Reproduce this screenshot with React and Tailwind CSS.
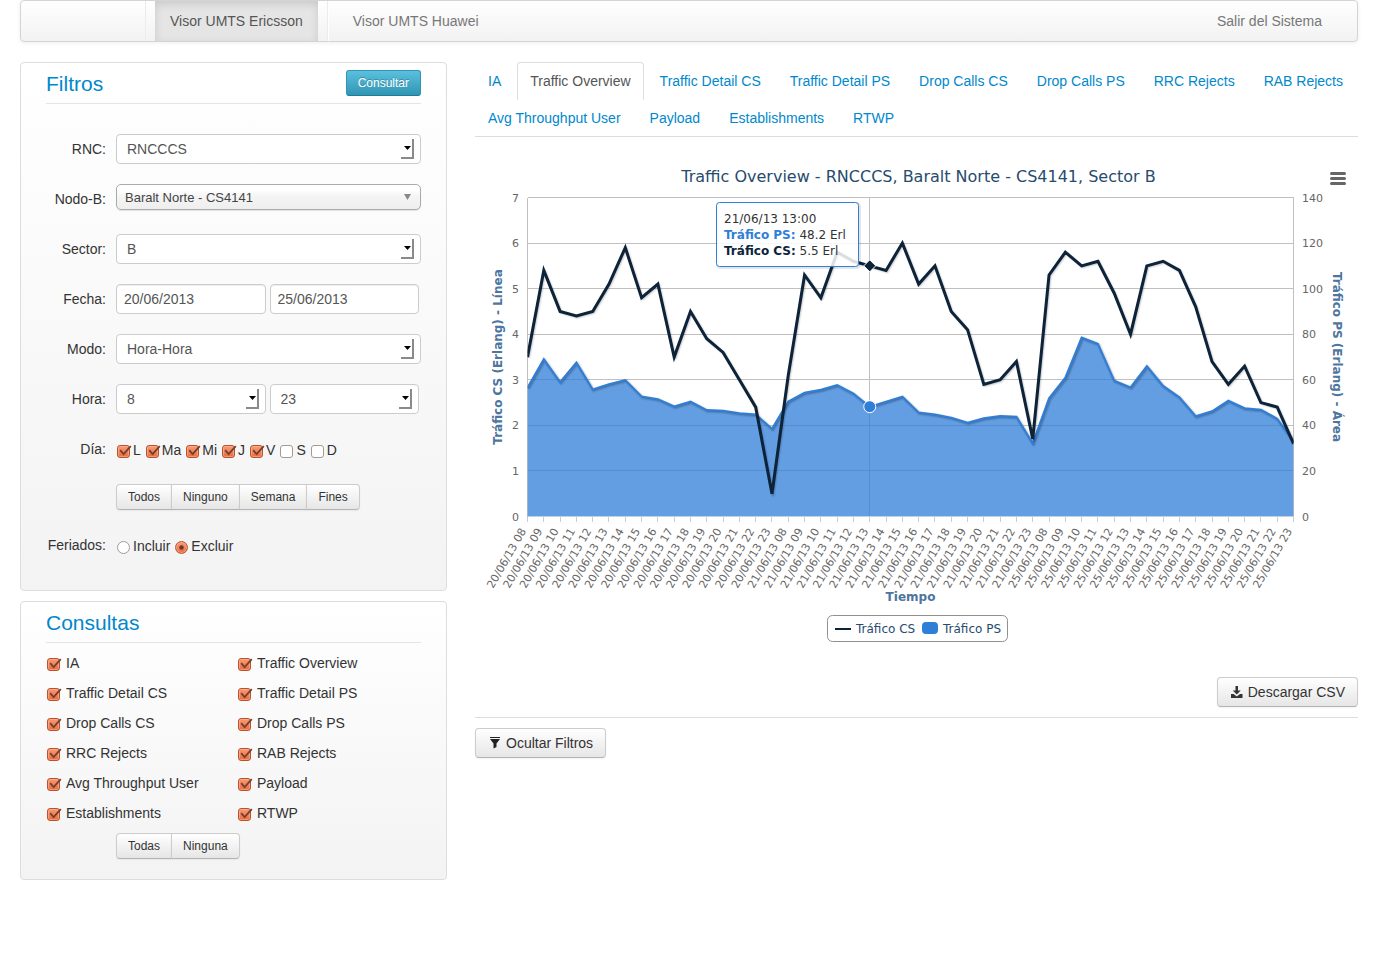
import { useId } from "react";

const CS = [
  3.5, 5.4, 4.5, 4.4, 4.5, 5.1, 5.9, 4.8, 5.1, 3.5, 4.5, 3.9, 3.6, 3.0, 2.4, 0.5,
  3.1, 5.3, 4.8, 5.8, 5.6, 5.5, 5.4, 6.0, 5.1, 5.5, 4.5, 4.1, 2.9, 3.0, 3.4, 1.7,
  5.3, 5.8, 5.5, 5.6, 4.9, 4.0, 5.5, 5.6, 5.4, 4.6, 3.4, 2.9, 3.3, 2.5, 2.4, 1.6,
];
const PS = [
  56.5, 69.1, 59, 67.6, 55.8, 58.1, 59.9, 52.7, 51.5, 48.3, 50.4, 46.7, 46.4, 45.3, 44.8, 38.5,
  50.5, 54.3, 55.6, 57.7, 53.9, 48.2, 50.4, 52.6, 45.7, 44.8, 43.4, 41.2, 43.1, 44.1, 43.8, 32.1,
  51.9, 60.9, 78.5, 75.8, 59.6, 56.7, 66, 57.3, 52.3, 44, 46.2, 50.8, 47.5, 46.9, 42.9, 33,
];
const DAYS = ["20/06/13", "21/06/13", "25/06/13"];

const LEFT = 52.5;
const RIGHT = 818.5;
const TOP = 40.5;
const BOTTOM = 359.5;
const xAt = (i) => LEFT + (i * (RIGHT - LEFT)) / 47;
const yAt = (v, max) => BOTTOM - (v * (BOTTOM - TOP)) / max;
const csPoints = CS.map((v, i) => `${xAt(i)},${yAt(v, 7)}`).join(" ");
const psPoints = PS.map((v, i) => `${xAt(i)},${yAt(v, 140)}`).join(" ");

function Series({ points, color, width }) {
  return (
    <g fill="none" strokeLinejoin="round">
      {[5, 3, 1].map((w, i) => (
        <polyline key={w} points={points} stroke="#000" strokeOpacity={0.05 * (i + 1)} strokeWidth={w} transform="translate(1 1)" />
      ))}
      <polyline points={points} stroke={color} strokeWidth={width} strokeLinejoin="miter" />
    </g>
  );
}

function Chart() {
  const clip = useId();
  const hover = xAt(21);
  return (
    <div className="relative mt-5">
      <svg viewBox="0 0 883 500" className="block w-full font-['DejaVu_Sans',Verdana,sans-serif]" role="img" aria-label="Traffic Overview">
        <defs>
          <clipPath id={clip}>
            <rect x={LEFT} y={TOP} width={RIGHT - LEFT} height={BOTTOM - TOP} />
          </clipPath>
        </defs>
        <text x="443.5" y="25" textAnchor="middle" fontSize="16" fill="#274b6d">
          Traffic Overview - RNCCCS, Baralt Norte - CS4141, Sector B
        </text>
        <g stroke="#c0c0c0" shapeRendering="crispEdges">
          {[0, 1, 2, 3, 4, 5, 6, 7].map((v) => (
            <line key={v} x1={LEFT} x2={RIGHT} y1={yAt(v, 7)} y2={yAt(v, 7)} />
          ))}
          <line x1={LEFT} x2={LEFT} y1={TOP} y2={BOTTOM} />
          <line x1={RIGHT} x2={RIGHT} y1={TOP} y2={BOTTOM} />
          <line x1={hover} x2={hover} y1={TOP} y2={BOTTOM} />
        </g>
        <g clipPath={`url(#${clip})`}>
          <polygon points={`${LEFT},${BOTTOM} ${psPoints} ${RIGHT},${BOTTOM}`} fill="#2f7ed8" fillOpacity="0.75" />
          <Series points={psPoints} color="#2f7ed8" width="2" />
          <Series points={csPoints} color="#0d233a" width="3" />
        </g>
        <g stroke="#c0d0e0" shapeRendering="crispEdges">
          <line x1={LEFT} x2={RIGHT} y1={BOTTOM} y2={BOTTOM} />
          {CS.map((_, i) => (
            <line key={i} x1={xAt(i)} x2={xAt(i)} y1={BOTTOM} y2={BOTTOM + 5} />
          ))}
        </g>
        <circle cx={hover} cy={yAt(48.2, 140)} r="6" fill="#2f7ed8" stroke="#fff" />
        <path d={`M${hover} ${yAt(5.5, 7) - 6}l6 6l-6 6l-6 -6z`} fill="#0d233a" stroke="#fff" />

        <g fontSize="11" fill="#666">
          {[0, 1, 2, 3, 4, 5, 6, 7].map((v) => (
            <text key={v} x="44" y={yAt(v, 7) + 4} textAnchor="end">{v}</text>
          ))}
          {[0, 20, 40, 60, 80, 100, 120, 140].map((v) => (
            <text key={v} x="827" y={yAt(v, 140) + 4}>{v}</text>
          ))}
          {CS.map((_, i) => (
            <text key={i} textAnchor="end" transform={`translate(${xAt(i) - 1} 374) rotate(-60)`}>
              {DAYS[Math.floor(i / 16)]} {String((i % 16) + 8).padStart(2, "0")}
            </text>
          ))}
        </g>
        <g fontSize="12" fontWeight="bold" fill="#4d759e" textAnchor="middle">
          <text transform="translate(27 200) rotate(-90)">Tráfico CS (Erlang) - Línea</text>
          <text transform="translate(858 200) rotate(90)">Tráfico PS (Erlang) - Área</text>
          <text x="435.5" y="444">Tiempo</text>
        </g>

        <rect x="352.5" y="458.5" width="180" height="26" rx="5" fill="#fff" stroke="#909090" />
        <line x1="360" x2="376" y1="472" y2="472" stroke="#0d233a" strokeWidth="2" />
        <rect x="447" y="465" width="16" height="12" rx="4" fill="#2f7ed8" />
        <g fontSize="12" fill="#274b6d">
          <text x="381" y="476">Tráfico CS</text>
          <text x="468" y="476">Tráfico PS</text>
        </g>

        <rect x="242.5" y="46.5" width="142" height="64" rx="3" fill="none" stroke="#000" strokeOpacity="0.1" strokeWidth="3" />
        <rect x="241.5" y="45.5" width="142" height="64" rx="3" fill="#fff" fillOpacity="0.85" stroke="#2f7ed8" />
        <g fontSize="12" fill="#333">
          <text x="249" y="66">21/06/13 13:00</text>
          <text x="249" y="82">
            <tspan fontWeight="bold" fill="#2f7ed8">Tráfico PS:</tspan> 48.2 Erl
          </text>
          <text x="249" y="98">
            <tspan fontWeight="bold" fill="#0d233a">Tráfico CS:</tspan> 5.5 Erl
          </text>
        </g>
      </svg>
      <button type="button" aria-label="Menú del gráfico" className="absolute top-[10px] right-2 p-1">
        <svg viewBox="0 0 16 14" className="block h-[14px] w-4">
          <path d="M1.5 2.5H14.5M1.5 7.5H14.5M1.5 12.5H14.5" stroke="#666" strokeWidth="3" strokeLinecap="round" />
        </svg>
      </button>
    </div>
  );
}

const tickClass =
  "peer col-start-1 row-start-1 size-[13px] appearance-none border border-[#a09b97] bg-white checked:border-[#b9532e] checked:bg-linear-to-b checked:from-[#f79a74] checked:to-[#ea6c3f] checked:shadow-[inset_0_0_0_1px_rgba(255,190,160,0.5)]";

function Check({ label, name, wide, checked = true }) {
  return (
    <label className={wide ? "flex items-center gap-[6px]" : "flex items-center gap-[3px]"}>
      <span className="mt-[2px] grid">
        <input type="checkbox" name={name} defaultChecked={checked} className={`${tickClass} rounded-[3px]`} />
        <svg viewBox="0 0 15 13" className="pointer-events-none invisible col-start-1 row-start-1 -mr-[2px] h-[13px] w-[15px] peer-checked:visible">
          <path d="M3.2 5.2L6.6 9.2L13.8 1.2" fill="none" stroke="#74402e" strokeWidth="1.8" />
        </svg>
      </span>
      {label}
    </label>
  );
}

function Radio({ label, checked }) {
  return (
    <label className="flex items-center gap-[3px]">
      <span className="mt-[2px] grid">
        <input type="radio" name="feriados" defaultChecked={checked} className={`${tickClass} rounded-full`} />
        <svg viewBox="0 0 13 13" className="pointer-events-none invisible col-start-1 row-start-1 size-[13px] peer-checked:visible">
          <circle cx="6.5" cy="6.5" r="2.2" fill="#6b3a2a" />
        </svg>
      </span>
      {label}
    </label>
  );
}

function Select({ id, value, label }) {
  return (
    <span className="grid w-full">
      <select
        id={id}
        aria-label={label}
        defaultValue={value}
        className="col-start-1 row-start-1 h-[30px] w-full appearance-none rounded border border-[#ccc] bg-white px-[10px] text-[#555]"
      >
        <option>{value}</option>
      </select>
      <span className="pointer-events-none col-start-1 row-start-1 mr-[7px] flex h-5 w-[13px] items-center justify-end self-center justify-self-end border-r-2 border-b-2 border-[#8a8a8a] pr-px">
        <svg viewBox="0 0 7 4" className="h-1 w-[7px]">
          <path d="M0 0H7L3.5 4z" fill="#000" />
        </svg>
      </span>
    </span>
  );
}

const inputClass = "h-[30px] w-full min-w-0 rounded border border-[#ccc] bg-white px-[7px] text-[#555] shadow-[inset_0_1px_1px_rgba(0,0,0,0.075)]";
const labelClass = "w-[60px] shrink-0 text-right leading-[30px]";
const btnClass = "border border-[#ccc] border-b-[#b3b3b3] bg-linear-to-b from-white to-[#e6e6e6] text-[#333] shadow-[0_1px_2px_rgba(0,0,0,0.05)]";

function Row({ label, htmlFor, children }) {
  return (
    <div className="flex gap-[10px]">
      {htmlFor ? <label htmlFor={htmlFor} className={labelClass}>{label}</label> : <span className={labelClass}>{label}</span>}
      <div className="min-w-0 flex-1">{children}</div>
    </div>
  );
}

function ButtonGroup({ items }) {
  return (
    <div className="ml-[70px] flex">
      {items.map((t) => (
        <button key={t} type="button" className={`${btnClass} -ml-px px-[11px] py-[2px] text-[12px] leading-5 first:ml-0 first:rounded-l last:rounded-r`}>
          {t}
        </button>
      ))}
    </div>
  );
}

const panelClass = "rounded border border-[#ddd] bg-linear-to-b from-white to-[#f3f3f3] px-[25px]";
const headClass = "flex h-[41px] items-center justify-between border-b border-[#e5e5e5]";
const titleClass = "pt-[2px] text-[21px] text-[#08c]";
const TABS = [
  "IA", "Traffic Overview", "Traffic Detail CS", "Traffic Detail PS", "Drop Calls CS", "Drop Calls PS",
  "RRC Rejects", "RAB Rejects", "Avg Throughput User", "Payload", "Establishments", "RTWP",
];

export default function App() {
  return (
    <div className="px-5 font-['Liberation_Sans',Arial,sans-serif] text-[14px] leading-5 text-[#333]">
      <nav className="flex h-[42px] rounded border border-[#d4d4d4] bg-linear-to-b from-white to-[#f2f2f2] pr-5 text-[#777] shadow-[0_1px_4px_rgba(0,0,0,0.07)]">
        <div className="mr-[9px] w-[125px] border-r border-[#ececec]" />
        <a href="#ericsson" className="bg-[#e5e5e5] px-[15px] py-[10px] text-[#555] shadow-[inset_0_3px_8px_rgba(0,0,0,0.125)]">Visor UMTS Ericsson</a>
        <div className="mx-[9px] w-[2px] border-l border-[#ececec] bg-white" />
        <a href="#huawei" className="px-[15px] py-[10px]">Visor UMTS Huawei</a>
        <a href="#salir" className="ml-auto px-[15px] py-[10px]">Salir del Sistema</a>
      </nav>

      <main className="mt-5 grid grid-cols-[minmax(0,427fr)_minmax(0,883fr)] items-start gap-7">
        <div className="flex flex-col gap-[10px]">
          <form className={`${panelClass} pb-[30px]`}>
            <div className={headClass}>
              <h2 className={titleClass}>Filtros</h2>
              <button type="button" className="rounded-[3px] border border-[#2f96b4] border-b-[#1f7a94] bg-linear-to-b from-[#5bc0de] to-[#2f96b4] px-[11px] py-[2px] text-[12px] leading-5 text-white text-shadow-[0_-1px_0_rgba(0,0,0,0.25)]">
                Consultar
              </button>
            </div>
            <div className="mt-[30px] flex flex-col gap-5">
              <Row label="RNC:" htmlFor="rnc"><Select id="rnc" value="RNCCCS" /></Row>
              <Row label="Nodo-B:" htmlFor="nodo">
                <span className="grid">
                  <select id="nodo" className="col-start-1 row-start-1 h-[26px] w-full appearance-none rounded-[5px] border border-[#aaa] bg-linear-to-b from-white from-20% via-[#f4f4f4] via-50% to-[#eee] px-2 pt-[2px] text-[13px] text-[#444] shadow-[0_1px_1px_rgba(0,0,0,0.1)]">
                    <option>Baralt Norte - CS4141</option>
                  </select>
                  <svg viewBox="0 0 7 6" className="pointer-events-none col-start-1 row-start-1 mr-[10px] h-[6px] w-[7px] self-center justify-self-end">
                    <path d="M0 0H7L3.5 6z" fill="#888" />
                  </svg>
                </span>
              </Row>
              <Row label="Sector:" htmlFor="sector"><Select id="sector" value="B" /></Row>
              <Row label="Fecha:" htmlFor="desde">
                <div className="flex gap-1 pr-[2px]">
                  <input id="desde" defaultValue="20/06/2013" className={inputClass} />
                  <input aria-label="Fecha hasta" defaultValue="25/06/2013" className={inputClass} />
                </div>
              </Row>
              <Row label="Modo:" htmlFor="modo"><Select id="modo" value="Hora-Hora" /></Row>
              <Row label="Hora:" htmlFor="hora">
                <div className="flex gap-1 pr-[2px]">
                  <Select id="hora" value="8" />
                  <Select label="Hora hasta" value="23" />
                </div>
              </Row>
              <Row label="Día:">
                <div className="flex h-[30px] items-center gap-[5px] pt-[2px] pl-px">
                  {["L", "Ma", "Mi", "J", "V", "S", "D"].map((d, i) => (
                    <Check key={d} label={d} name="dia" checked={i < 5} />
                  ))}
                </div>
              </Row>
              <ButtonGroup items={["Todos", "Ninguno", "Semana", "Fines"]} />
              <Row label="Feriados:">
                <div className="flex h-[30px] items-center gap-[5px] pt-[2px] pl-px">
                  <Radio label="Incluir" />
                  <Radio label="Excluir" checked />
                </div>
              </Row>
            </div>
          </form>

          <form className={`${panelClass} pb-5`}>
            <div className={headClass}>
              <h2 className={titleClass}>Consultas</h2>
            </div>
            <div className="my-[5px] grid grid-cols-2 gap-x-2 pl-px">
              {TABS.map((t) => (
                <div key={t} className="flex h-[30px] items-center">
                  <Check label={t} name="consulta" wide />
                </div>
              ))}
            </div>
            <ButtonGroup items={["Todas", "Ninguna"]} />
          </form>
        </div>

        <section>
          <ul className="flex flex-wrap gap-x-[3px] border-b border-[#ddd]">
            {TABS.map((t) => (
              <li key={t} className="-mb-px">
                <a
                  href="#grafico"
                  className={
                    t === "Traffic Overview"
                      ? "block rounded-t border border-[#ddd] border-b-transparent bg-white px-3 py-2 text-[#555]"
                      : "block rounded-t border border-transparent px-3 py-2 text-[#08c]"
                  }
                >
                  {t}
                </a>
              </li>
            ))}
          </ul>
          <Chart />
          <div className="mt-5 flex justify-end border-b border-[#ddd] pb-[10px]">
            <button type="button" className={`${btnClass} flex items-center gap-1 rounded px-3 py-1`}>
              <svg viewBox="0 0 14 14" className="size-[14px]" fill="#333">
                <path d="M5.5 1h2.5v4.5h2.7L6.8 9.5 2.8 5.5h2.7zM1 9h2.6l3.2 2.6L10 9h2.5v4H1z" />
              </svg>
              Descargar CSV
            </button>
          </div>
          <button type="button" className={`${btnClass} mt-[10px] flex items-center gap-1 rounded px-3 py-1`}>
            <svg viewBox="0 0 14 14" className="size-[14px]" fill="#222">
              <path d="M2 1h10v1H2zM2 3h10L8.5 7.5v3.5l-3 1.5v-5z" />
            </svg>
            Ocultar Filtros
          </button>
        </section>
      </main>
    </div>
  );
}
